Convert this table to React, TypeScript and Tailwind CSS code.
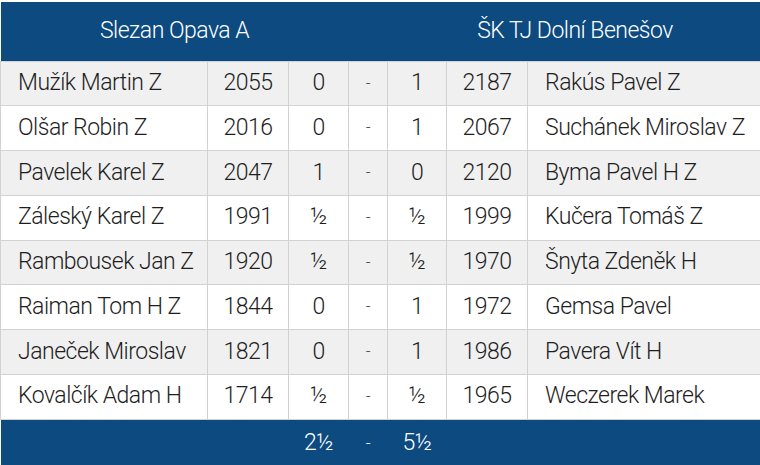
const rows = [
    { home: "Mužík Martin Z", homeElo: "2055", hs: "0", as: "1", awayElo: "2187", away: "Rakús Pavel Z" },
    { home: "Olšar Robin Z", homeElo: "2016", hs: "0", as: "1", awayElo: "2067", away: "Suchánek Miroslav Z" },
    { home: "Pavelek Karel Z", homeElo: "2047", hs: "1", as: "0", awayElo: "2120", away: "Byma Pavel H Z" },
    { home: "Záleský Karel Z", homeElo: "1991", hs: "½", as: "½", awayElo: "1999", away: "Kučera Tomáš Z" },
    { home: "Rambousek Jan Z", homeElo: "1920", hs: "½", as: "½", awayElo: "1970", away: "Šnyta Zdeněk H" },
    { home: "Raiman Tom H Z", homeElo: "1844", hs: "0", as: "1", awayElo: "1972", away: "Gemsa Pavel" },
    { home: "Janeček Miroslav", homeElo: "1821", hs: "0", as: "1", awayElo: "1986", away: "Pavera Vít H" },
    { home: "Kovalčík Adam H", homeElo: "1714", hs: "½", as: "½", awayElo: "1965", away: "Weczerek Marek" },
];

const cell = "border border-[#d2d2d2] text-center";

const App = () => {
    return (
        <div className="w-[760px] h-[465px] overflow-hidden bg-white pt-[2px]" style={{ fontFamily: "Roboto, 'Liberation Sans', sans-serif" }}>
            <table className="table-fixed border-collapse w-[762px] font-light text-[23px] tracking-[-0.5px] text-[#1e1e1e]">
                <colgroup>
                    <col className="w-[207px]" />
                    <col className="w-[81px]" />
                    <col className="w-[60px]" />
                    <col className="w-[39px]" />
                    <col className="w-[59px]" />
                    <col className="w-[81px]" />
                    <col className="w-[235px]" />
                </colgroup>
                <thead>
                    <tr className="h-[59px] bg-[#0c4a80] text-white">
                        <th colSpan={3} className="font-light text-center">Slezan Opava A</th>
                        <th></th>
                        <th colSpan={3} className="font-light text-center">ŠK TJ Dolní Benešov</th>
                    </tr>
                </thead>
                <tbody>
                    {rows.map((r, i) => (
                        <tr key={i} className={`h-[44.75px] ${i % 2 === 0 ? "bg-[#f0f0f0]" : "bg-white"}`}>
                            <td className="border border-[#d2d2d2] pl-[17px] whitespace-nowrap">{r.home}</td>
                            <td className={cell}>{r.homeElo}</td>
                            <td className={cell}>{r.hs}</td>
                            <td className={`${cell} text-[17px] text-[#444]`}>-</td>
                            <td className={cell}>{r.as}</td>
                            <td className={cell}>{r.awayElo}</td>
                            <td className="border border-[#d2d2d2] pl-[17px] whitespace-nowrap">{r.away}</td>
                        </tr>
                    ))}
                </tbody>
                <tfoot>
                    <tr className="h-[48px] bg-[#0c4a80] text-white">
                        <td colSpan={2}></td>
                        <td className="text-center">2½</td>
                        <td className="text-center text-[17px]">-</td>
                        <td className="text-center">5½</td>
                        <td colSpan={2}></td>
                    </tr>
                </tfoot>
            </table>
        </div>
    );
}

export default App;
